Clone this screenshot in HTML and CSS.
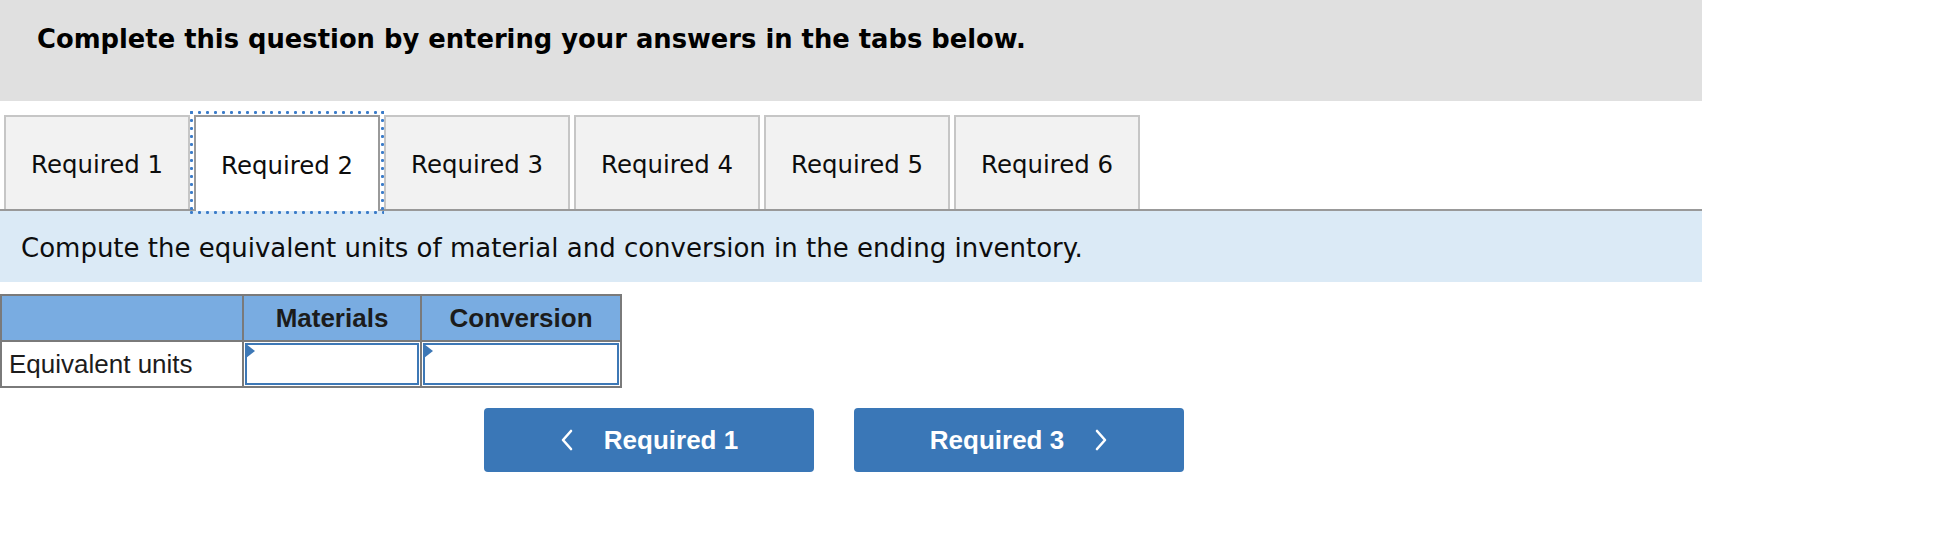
FILE: index.html
```html
<!DOCTYPE html>
<html lang="en">
<head>
<meta charset="utf-8">
<title>Required 2</title>
<link rel="stylesheet" href="styles.css">
</head>
<body>
<div class="page">
  <div class="prompt">
    <h1 class="prompt-title">Complete this question by entering your answers in the tabs below.</h1>
  </div>

  <div class="tabs">
    <div class="tab">Required 1</div>
    <div class="tab active">Required 2</div>
    <div class="tab">Required 3</div>
    <div class="tab">Required 4</div>
    <div class="tab">Required 5</div>
    <div class="tab">Required 6</div>
  </div>

  <div class="instruction">Compute the equivalent units of material and conversion in the ending inventory.</div>

  <table class="grid">
    <colgroup>
      <col class="c-label">
      <col class="c-mat">
      <col class="c-conv">
    </colgroup>
    <thead>
      <tr>
        <th></th>
        <th>Materials</th>
        <th>Conversion</th>
      </tr>
    </thead>
    <tbody>
      <tr>
        <td class="label">Equivalent units</td>
        <td class="input-cell"><div class="entry"></div></td>
        <td class="input-cell"><div class="entry"></div></td>
      </tr>
    </tbody>
  </table>

  <div class="nav">
    <button class="navbtn" type="button">
      <svg class="chev" width="14" height="22" viewBox="0 0 14 22"><polyline points="11,2 3,11 11,20" fill="none" stroke="#fff" stroke-width="2.6" stroke-linecap="round" stroke-linejoin="round"/></svg>
      <span>Required 1</span>
    </button>
    <button class="navbtn" type="button">
      <span>Required 3</span>
      <svg class="chev" width="14" height="22" viewBox="0 0 14 22"><polyline points="3,2 11,11 3,20" fill="none" stroke="#fff" stroke-width="2.6" stroke-linecap="round" stroke-linejoin="round"/></svg>
    </button>
  </div>
</div>
</body>
</html>
```

FILE: styles.css
```css
html, body {
  margin: 0;
  padding: 0;
  background: #ffffff;
}

.page {
  width: 1702px;
}

.prompt {
  height: 101px;
  background: #e0e0e0;
  box-sizing: border-box;
  padding: 24px 0 0 37px;
}

.prompt-title {
  margin: 0;
  font-family: "DejaVu Sans", Verdana, sans-serif;
  font-weight: bold;
  font-size: 25.8px;
  line-height: 30px;
  color: #000;
}

.tabs {
  display: flex;
  align-items: flex-start;
  gap: 4px;
  height: 94px;
  margin-top: 14px;
  padding-left: 4px;
  border-bottom: 2px solid #999999;
}

.tab {
  width: 186px;
  height: 94px;
  box-sizing: border-box;
  border: 2px solid #c6c6c6;
  border-bottom: 0;
  background: #f2f2f2;
  display: flex;
  align-items: center;
  justify-content: center;
  padding-top: 2px;
  font-family: "DejaVu Sans", Verdana, sans-serif;
  font-size: 24.4px;
  color: #0d0d0d;
}

.tab.active {
  position: relative;
  height: 96px;
  background: #ffffff;
  border-color: #9a9a9a;
}

.tab.active::after {
  content: "";
  position: absolute;
  left: -6px;
  right: -6px;
  top: -6px;
  bottom: -3px;
  background:
    radial-gradient(circle at 1.5px 1.5px, #3b7cc9 1.3px, transparent 1.7px) 0 0 / 8px 3px repeat-x,
    radial-gradient(circle at 1.5px 1.5px, #3b7cc9 1.3px, transparent 1.7px) 0 100% / 8px 3px repeat-x,
    radial-gradient(circle at 1.5px 1.5px, #3b7cc9 1.3px, transparent 1.7px) 0 0 / 3px 8px repeat-y,
    radial-gradient(circle at 1.5px 1.5px, #3b7cc9 1.3px, transparent 1.7px) 100% 0 / 3px 8px repeat-y;
}

.instruction {
  height: 71px;
  background: #dbeaf6;
  box-sizing: border-box;
  padding-left: 21px;
  padding-top: 2px;
  display: flex;
  align-items: center;
  font-family: "DejaVu Sans", Verdana, sans-serif;
  font-size: 26px;
  color: #0d0d0d;
}

.grid {
  margin-top: 12px;
  border-collapse: collapse;
  table-layout: fixed;
  width: 620px;
  font-family: "Liberation Sans", Arial, sans-serif;
}

.c-label { width: 242px; }
.c-mat { width: 178px; }
.c-conv { width: 200px; }

.grid th,
.grid td {
  border: 2px solid #7a7a7a;
  padding: 0;
}

.grid th {
  height: 44px;
  background: #79ace1;
  font-weight: bold;
  font-size: 26px;
  color: #1c1c1c;
  text-align: center;
}

.grid td {
  height: 42px;
}

.grid td.label {
  padding-left: 7px;
  font-size: 26px;
  color: #1c1c1c;
  text-align: left;
}

.grid td.input-cell {
  padding: 1px;
}

.entry {
  position: relative;
  height: 38px;
  border: 2px solid #3d78b6;
  background: #ffffff;
}

.entry::before {
  content: "";
  position: absolute;
  left: -1px;
  top: -1px;
  border-left: 9px solid #3d78b6;
  border-top: 7px solid transparent;
  border-bottom: 7px solid transparent;
}

.nav {
  display: flex;
  gap: 40px;
  margin-top: 20px;
  padding-left: 484px;
}

.navbtn {
  width: 330px;
  height: 64px;
  border: 0;
  border-radius: 4px;
  background: #3a77b7;
  color: #ffffff;
  display: flex;
  align-items: center;
  justify-content: center;
  gap: 30px;
  font-family: "Liberation Sans", Arial, sans-serif;
  font-weight: bold;
  font-size: 26px;
  padding: 0;
}

.chev {
  display: block;
}
```
